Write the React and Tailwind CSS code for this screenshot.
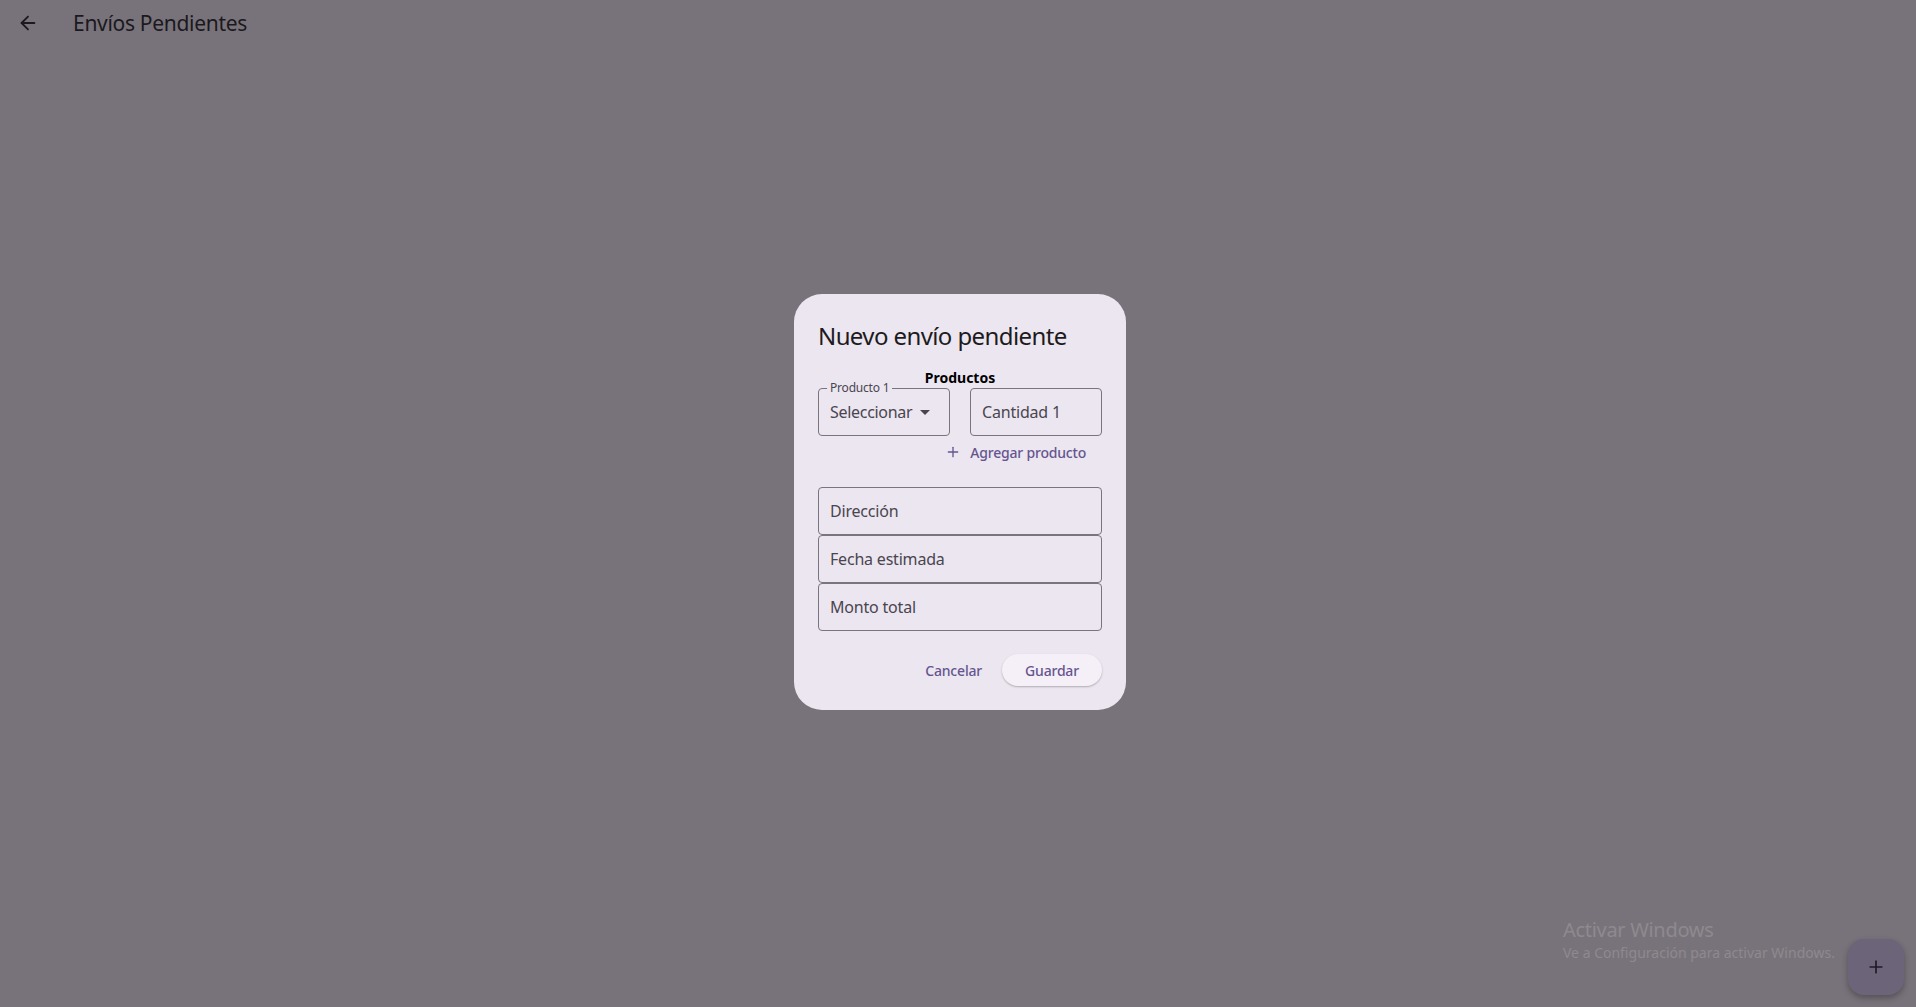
import { ArrowLeft, Plus } from "lucide-react"

const font = { fontFamily: '"Segoe UI", "Noto Sans", "Open Sans", sans-serif' }

function Field({ placeholder }) {
  return (
    <div className="h-[48px] w-full rounded-[4px] border border-[#79747e] flex items-center px-[11px]">
      <span className="text-[16px] tracking-[-0.2px] text-[#49454f]">{placeholder}</span>
    </div>
  )
}

export default function App() {
  return (
    <main className="relative w-full h-[1007px] bg-[#78737a] overflow-hidden" style={font}>
      {/* App bar */}
      <header className="h-[46px] flex items-center pl-[17px]">
        <ArrowLeft className="h-[22px] w-[22px] text-[#1b191d]" strokeWidth={2} />
        <h1 className="ml-[34px] text-[21px] tracking-[-0.3px] text-[#1b191d] leading-none">Envíos Pendientes</h1>
      </header>

      {/* Dialog */}
      <div className="absolute left-[794px] top-[294px] w-[332px] rounded-[28px] bg-[#ece6f0] px-[24px] pt-[26px] pb-[24px]">
        <h2 className="text-[24px] leading-[32px] tracking-[-0.6px] text-[#1d1b20]">Nuevo envío pendiente</h2>

        <p className="mt-[18px] text-center text-[14px] font-bold leading-[16px] text-black">Productos</p>

        <div className="mt-[2px] flex gap-[20px]">
          <div className="relative h-[48px] w-[132px] rounded-[4px] border border-[#79747e] flex items-center pl-[11px] pr-[12px]">
            <span className="absolute -top-[8px] left-[8px] bg-[#ece6f0] px-[3px] text-[12px] leading-[14px] tracking-[-0.2px] text-[#49454f]">Producto 1</span>
            <span className="text-[16px] tracking-[-0.3px] text-[#49454f]">Seleccionar</span>
            <svg viewBox="0 0 10 5" className="ml-[8px] w-[10px] h-[5px]">
              <path d="M0 0h10L5 5z" fill="#49454f" />
            </svg>
          </div>
          <div className="h-[48px] w-[132px] rounded-[4px] border border-[#79747e] flex items-center px-[11px]">
            <span className="text-[16px] tracking-[-0.2px] text-[#49454f]">Cantidad 1</span>
          </div>
        </div>

        <div className="mt-[4px] flex justify-end pr-[16px]">
          <button className="flex items-center gap-[9px] h-[24px] text-[14px] font-medium tracking-[-0.2px] text-[#65558f]">
            <Plus className="h-[16px] w-[16px]" strokeWidth={2} />
            Agregar producto
          </button>
        </div>

        <div className="mt-[23px] flex flex-col">
          <Field placeholder="Dirección" />
          <Field placeholder="Fecha estimada" />
          <Field placeholder="Monto total" />
        </div>

        <div className="mt-[23px] flex justify-end items-center gap-[8px]">
          <button className="h-[32px] px-[12px] text-[14px] font-medium tracking-[-0.2px] text-[#65558f]">Cancelar</button>
          <button className="h-[32px] w-[100px] rounded-full bg-[#f5eff8] text-[14px] font-medium tracking-[-0.2px] text-[#65558f] shadow-[0_1px_2px_rgba(0,0,0,0.25)]">Guardar</button>
        </div>
      </div>

      {/* Windows watermark */}
      <div className="absolute left-[1563px] top-[920px] text-[#8e898f] leading-none">
        <p className="text-[20px] tracking-[-0.3px]">Activar Windows</p>
        <p className="mt-[6px] text-[14px]">Ve a Configuración para activar Windows.</p>
      </div>

      {/* FAB */}
      <button className="absolute left-[1848px] top-[939px] h-[56px] w-[56px] rounded-[16px] bg-[#6c6479] shadow-[0_3px_6px_rgba(0,0,0,0.3)] flex items-center justify-center">
        <Plus className="h-[20px] w-[20px] text-[#1f1a2a]" strokeWidth={2} />
      </button>
    </main>
  )
}
